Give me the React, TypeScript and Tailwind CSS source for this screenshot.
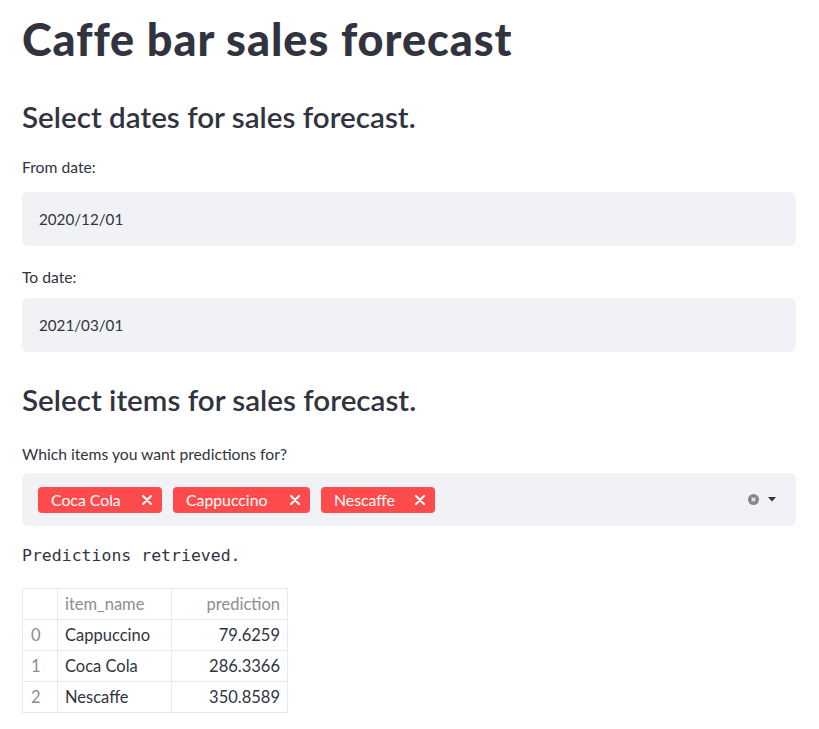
import React from "react";

const font = { fontFamily: "Lato, 'Noto Sans', sans-serif" };

function Tag({ label, width }: { label: string; width: number }) {
  return (
    <div
      style={{ width }}
      className="flex items-center justify-between h-[26px] rounded-[4px] bg-[#ff4b4b] text-white pl-[13px] pr-[10px] text-[15.8px] mr-[11px]"
    >
      <span>{label}</span>
      <svg width="10" height="10" viewBox="0 0 10 10">
        <path d="M1 1 L9 9 M9 1 L1 9" stroke="white" strokeWidth="2" strokeLinecap="round" />
      </svg>
    </div>
  );
}

export default function App() {
  const rows = [
    ["0", "Cappuccino", "79.6259"],
    ["1", "Coca Cola", "286.3366"],
    ["2", "Nescaffe", "350.8589"],
  ];
  return (
    <div className="w-[819px] h-[729px] bg-white text-[#31333f] overflow-hidden" style={font}>
      <div className="px-[22px] w-[818px]">
        <h1 className="text-[45px] font-black leading-[1] pt-[17px] h-[86px] tracking-[0.95px]">Caffe bar sales forecast</h1>
        <h2 className="text-[29.6px] font-semibold leading-[1] pt-[16px] h-[58px]">Select dates for sales forecast.</h2>
        <div className="text-[15.7px] pt-[12px] h-[48px]">From date:</div>
        <div className="h-[54px] rounded-[6px] bg-[#f0f2f6] flex items-center px-[17px] text-[15.2px]">2020/12/01</div>
        <div className="text-[15.7px] pt-[20px] h-[52px]">To date:</div>
        <div className="h-[54px] rounded-[6px] bg-[#f0f2f6] flex items-center px-[17px] text-[15.2px]">2021/03/01</div>
        <h2 className="text-[29.6px] font-semibold leading-[1] pt-[33px] h-[84px]">Select items for sales forecast.</h2>
        <div className="text-[15.7px] pt-[7px] h-[37px]">Which items you want predictions for?</div>
        <div className="h-[53px] rounded-[6px] bg-[#f0f2f6] flex items-center pl-[16px] pr-[20px]">
          <Tag label="Coca Cola" width={124} />
          <Tag label="Cappuccino" width={137} />
          <Tag label="Nescaffe" width={114} />
          <div className="flex-1" />
          <svg width="11" height="11" viewBox="0 0 12 12" className="mr-[9px]">
            <circle cx="6" cy="6" r="6" fill="#85878f" />
            <path d="M4 4 L8 8 M8 4 L4 8" stroke="#f0f2f6" strokeWidth="1.5" />
          </svg>
          <svg width="8" height="5" viewBox="0 0 8 5">
            <path d="M0 0 L8 0 L4 4.5 Z" fill="#31333f" />
          </svg>
        </div>
        <div className="pt-[19px] h-[62px] text-[16.5px] leading-[1.3]" style={{ fontFamily: "'DejaVu Sans Mono', monospace" }}>
          Predictions retrieved.
        </div>
        <table className="border-collapse text-[16.5px]" style={font}>
          <thead>
            <tr className="h-[31px]">
              <th className="w-[35px] border border-[#e6e9ef] font-normal"></th>
              <th className="w-[114px] border border-[#e6e9ef] font-normal text-left pl-[7px] text-[#8a8d96]">item_name</th>
              <th className="w-[116px] border border-[#e6e9ef] font-normal text-right pr-[7px] text-[#8a8d96]">prediction</th>
            </tr>
          </thead>
          <tbody>
            {rows.map((r) => (
              <tr key={r[0]} className="h-[31px]">
                <td className="border border-[#e6e9ef] pl-[8px] text-[#8a8d96]">{r[0]}</td>
                <td className="border border-[#e6e9ef] pl-[7px]">{r[1]}</td>
                <td className="border border-[#e6e9ef] text-right pr-[7px]">{r[2]}</td>
              </tr>
            ))}
          </tbody>
        </table>
      </div>
    </div>
  );
}
